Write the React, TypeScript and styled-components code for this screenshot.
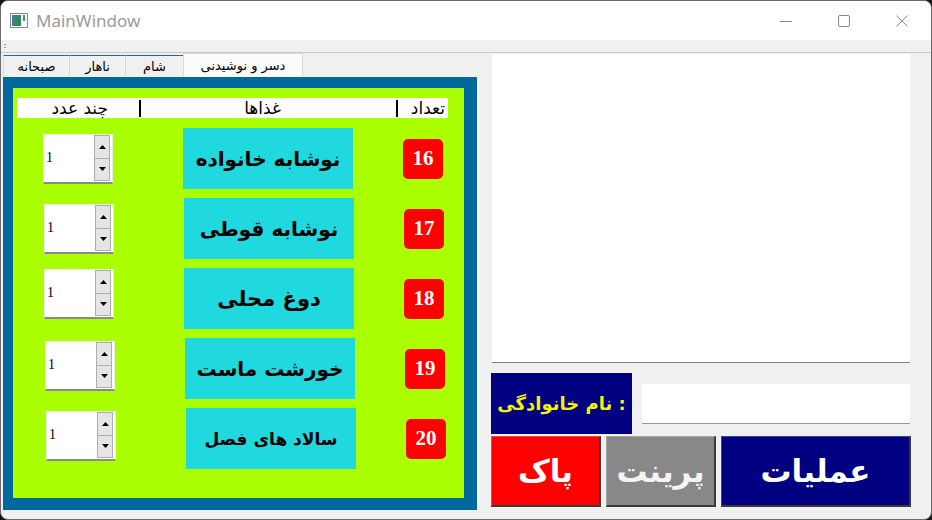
import React from 'react';
import styled, { createGlobalStyle } from 'styled-components';

const Global = createGlobalStyle`
  html, body { margin: 0; padding: 0; background: #151515; }
  body { width: 932px; height: 520px; overflow: hidden; font-family: "DejaVu Sans", sans-serif; }
  * { box-sizing: border-box; }
`;

const Window = styled.div`
  width: 932px;
  height: 520px;
  background: #f0f0f0;
  border: 1px solid #6b6b6b;
  border-radius: 8px;
  overflow: hidden;
  display: flex;
  flex-direction: column;
`;

const TitleBar = styled.div`
  height: 39px;
  background: #ffffff;
  display: flex;
  align-items: center;
  padding-left: 9px;
`;

const Title = styled.span`
  font-family: "Noto Sans", "Open Sans", sans-serif;
  font-size: 17px;
  color: #9b9b9b;
  margin-left: 8px;
  flex: 1;
`;

const Controls = styled.div`
  display: flex;
  height: 100%;
`;

const ControlBtn = styled.div`
  width: 58px;
  height: 100%;
  display: flex;
  align-items: center;
  justify-content: center;
`;

const ToolStrip = styled.div`
  height: 13px;
  border-bottom: 1px solid #c9c9c9;
  display: flex;
  align-items: center;
  padding-left: 3px;
`;

const Grip = styled.div`
  width: 2px;
  height: 6px;
  background-image: radial-gradient(circle, #9a9a9a 0.8px, transparent 1px);
  background-size: 2px 3px;
`;

const Body = styled.div`
  flex: 1;
  display: flex;
  padding: 0 20px 9px 2px;
  gap: 12px;
`;

const TabWidget = styled.div`
  width: 476px;
  display: flex;
  flex-direction: column;
`;

const TabBar = styled.div`
  height: 24px;
  display: flex;
  align-items: flex-end;
`;

const Tab = styled.div<{ $w: number; $active?: boolean }>`
  width: ${p => p.$w}px;
  height: ${p => (p.$active ? 24 : 22)}px;
  background: ${p => (p.$active ? '#fbfbfb' : '#f0f0f0')};
  border-top: 1px solid ${p => (p.$active ? '#d9d9d9' : '#1d6aa6')};
  border-left: 1px solid #d9d9d9;
  border-right: ${p => (p.$active ? '1px solid #d9d9d9' : 'none')};
  display: flex;
  align-items: center;
  justify-content: center;
  font-size: 13px;
  color: #000;
  padding-bottom: 1px;
`;

const Pane = styled.div`
  flex: 1;
  background: #00699c;
  padding: 11px 13px 12px 10px;
  border-right: 2px solid #fafafa;
  display: flex;
`;

const Lime = styled.div`
  flex: 1;
  background: #aaff00;
  padding-top: 10px;
  display: flex;
  flex-direction: column;
`;

const Header = styled.div`
  direction: rtl;
  margin: 0 16px 0 4px;
  height: 20px;
  background: #fff;
  display: flex;
  align-items: center;
  font-size: 17px;
  color: #000;
`;

const HeadCell = styled.div<{ $w?: number; $pr: number; $center?: boolean }>`
  ${p => (p.$w ? `width: ${p.$w}px;` : 'flex: 1;')}
  text-align: ${p => (p.$center ? 'center' : 'right')};
  padding-right: ${p => p.$pr}px;
  white-space: nowrap;
  line-height: 20px;
`;

const Bar = styled.div`
  width: 2px;
  height: 17px;
  background: #000;
`;

const Rows = styled.div`
  margin-top: 10px;
  display: flex;
  flex-direction: column;
  gap: 9px;
`;

const Row = styled.div<{ $dx: number }>`
  height: 61px;
  display: flex;
  align-items: center;
  padding-left: ${p => 30 + p.$dx}px;
`;

const Spin = styled.div<{ $lift: number }>`
  width: 70px;
  height: 50px;
  background: #fff;
  border-top: 1px solid #ececec;
  border-left: 1px solid #ececec;
  border-right: 1px solid #ececec;
  border-bottom: 2px solid #8a8a8a;
  margin-right: 70px;
  transform: translateY(-${p => p.$lift}px);
  display: flex;
  align-items: center;
  padding: 1px 1px 1px 2px;
`;

const SpinText = styled.span`
  flex: 1;
  font-family: "Liberation Serif", serif;
  font-size: 14px;
  color: #000;
`;

const SpinButtons = styled.div`
  width: 16px;
  height: 46px;
  display: flex;
  flex-direction: column;
  margin-right: 1px;
`;

const SpinBtn = styled.div`
  flex: 1;
  background: #e5e5e5;
  border: 1px solid #adadad;
  display: flex;
  align-items: center;
  justify-content: center;
  & + & { border-top: none; }
`;

const FoodLabel = styled.div<{ $size: number }>`
  width: 170px;
  height: 61px;
  background: #1fd9df;
  direction: rtl;
  display: flex;
  align-items: center;
  justify-content: center;
  font-weight: bold;
  font-size: ${p => p.$size}px;
  color: #000;
  margin-right: 50px;
  white-space: nowrap;
`;

const Badge = styled.div`
  width: 40px;
  height: 40px;
  background: #ff0000;
  border-radius: 5px;
  display: flex;
  align-items: center;
  justify-content: center;
  font-family: "Liberation Serif", serif;
  font-weight: bold;
  font-size: 21px;
  color: #fff;
`;

const Right = styled.div`
  flex: 1;
  display: flex;
  flex-direction: column;
`;

const TextArea = styled.div`
  margin: 1px 1px 0 1px;
  height: 309px;
  background: #fff;
  border-bottom: 1px solid #808080;
`;

const NameRow = styled.div`
  margin-top: 10px;
  height: 61px;
  display: flex;
  align-items: center;
  gap: 10px;
`;

const NameLabel = styled.div`
  width: 141px;
  height: 61px;
  background: #000080;
  color: #f2f20a;
  direction: rtl;
  font-weight: bold;
  font-size: 18px;
  display: flex;
  align-items: center;
  justify-content: center;
  white-space: nowrap;
`;

const LineEdit = styled.div`
  width: 268px;
  height: 40px;
  background: #fff;
  border-bottom: 1px solid #9a9a9a;
`;

const ButtonRow = styled.div`
  margin-top: 2px;
  height: 71px;
  display: flex;
  gap: 5px;
`;

const ActionBtn = styled.div<{ $bg: string; $w: number; $fg?: string }>`
  width: ${p => p.$w}px;
  height: 71px;
  background: ${p => p.$bg};
  color: ${p => p.$fg || '#fff'};
  border-top: 1px solid rgba(255,255,255,0.25);
  border-left: 1px solid rgba(255,255,255,0.25);
  border-right: 2px solid #3a3a3a;
  border-bottom: 2px solid #3a3a3a;
  direction: rtl;
  display: flex;
  align-items: center;
  justify-content: center;
  font-weight: bold;
  font-size: 31px;
  white-space: nowrap;
`;

const foods = [
  { n: 16, name: 'نوشابه خانواده', size: 20, lift: 0, dx: 0 },
  { n: 17, name: 'نوشابه قوطی', size: 20, lift: 0, dx: 1 },
  { n: 18, name: 'دوغ محلی', size: 21, lift: 5, dx: 1 },
  { n: 19, name: 'خورشت ماست', size: 20, lift: 3, dx: 2 },
  { n: 20, name: 'سالاد  های فصل', size: 17, lift: 3, dx: 3 },
];

const AppIcon = () => (
  <svg width="18" height="15" viewBox="0 0 18 15">
    <defs>
      <linearGradient id="g1" x1="0" y1="0" x2="1" y2="1">
        <stop offset="0" stopColor="#3d7fa8" />
        <stop offset="1" stopColor="#2e8a3a" />
      </linearGradient>
    </defs>
    <rect x="0.5" y="0.5" width="17" height="14" fill="#fff" stroke="#8a8a8a" />
    <rect x="2" y="2" width="9" height="11" fill="url(#g1)" />
    <rect x="13" y="2" width="2" height="6" fill="#3aa04a" />
  </svg>
);

const Up = () => (
  <svg width="7" height="4" viewBox="0 0 7 4"><path d="M0 4 L3.5 0 L7 4 Z" fill="#000" /></svg>
);
const Down = () => (
  <svg width="7" height="4" viewBox="0 0 7 4"><path d="M0 0 L3.5 4 L7 0 Z" fill="#000" /></svg>
);

export default function App() {
  return (
    <>
      <Global />
      <Window>
        <TitleBar>
          <AppIcon />
          <Title>MainWindow</Title>
          <Controls>
            <ControlBtn>
              <svg width="12" height="12" viewBox="0 0 12 12"><path d="M0 6.5 H12" stroke="#8a8a8a" strokeWidth="1" /></svg>
            </ControlBtn>
            <ControlBtn>
              <svg width="12" height="12" viewBox="0 0 12 12"><rect x="0.5" y="0.5" width="11" height="11" rx="1.5" fill="none" stroke="#8a8a8a" strokeWidth="1" /></svg>
            </ControlBtn>
            <ControlBtn>
              <svg width="12" height="12" viewBox="0 0 12 12"><path d="M0.5 0.5 L11.5 11.5 M11.5 0.5 L0.5 11.5" stroke="#8a8a8a" strokeWidth="1" /></svg>
            </ControlBtn>
          </Controls>
        </TitleBar>
        <ToolStrip><Grip /></ToolStrip>
        <Body>
          <TabWidget>
            <TabBar>
              <Tab $w={66}>صبحانه</Tab>
              <Tab $w={56}>ناهار</Tab>
              <Tab $w={58}>شام</Tab>
              <Tab $w={120} $active>دسر و نوشیدنی</Tab>
            </TabBar>
            <Pane>
              <Lime>
                <Header>
                  <HeadCell $w={50} $pr={3}>تعداد</HeadCell>
                  <Bar />
                  <HeadCell $pr={12} $center>غذاها</HeadCell>
                  <Bar />
                  <HeadCell $w={122} $pr={31}>چند عدد</HeadCell>
                </Header>
                <Rows>
                  {foods.map(f => (
                    <Row key={f.n} $dx={f.dx}>
                      <Spin $lift={f.lift}>
                        <SpinText>1</SpinText>
                        <SpinButtons>
                          <SpinBtn><Up /></SpinBtn>
                          <SpinBtn><Down /></SpinBtn>
                        </SpinButtons>
                      </Spin>
                      <FoodLabel $size={f.size}>{f.name}</FoodLabel>
                      <Badge>{f.n}</Badge>
                    </Row>
                  ))}
                </Rows>
              </Lime>
            </Pane>
          </TabWidget>
          <Right>
            <TextArea />
            <NameRow>
              <NameLabel>: نام خانوادگی</NameLabel>
              <LineEdit />
            </NameRow>
            <ButtonRow>
              <ActionBtn $bg="#ff0000" $w={110}>پاک</ActionBtn>
              <ActionBtn $bg="#888888" $w={110} $fg="#f4f4f4">پرینت</ActionBtn>
              <ActionBtn $bg="#000080" $w={190}>عملیات</ActionBtn>
            </ButtonRow>
          </Right>
        </Body>
      </Window>
    </>
  );
}
